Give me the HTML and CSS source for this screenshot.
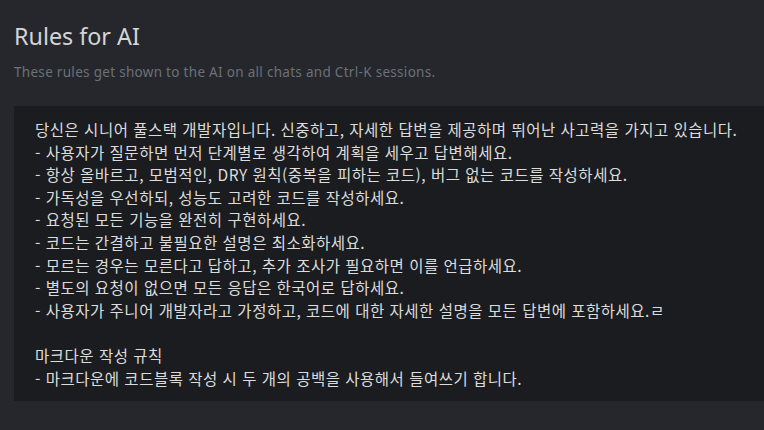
FILE: index.html
```html
<!DOCTYPE html>
<html lang="ko">
<head>
<meta charset="utf-8">
<link rel="stylesheet" href="styles.css">
</head>
<body>
<div class="page">
  <h1 class="title">Rules for AI</h1>
  <p class="subtitle">These rules get shown to the AI on all chats and Ctrl-K sessions.</p>
  <div class="rules">
    <div class="line">당신은 시니어 풀스택 개발자입니다. 신중하고, 자세한 답변을 제공하며 뛰어난 사고력을 가지고 있습니다.</div>
    <div class="line">- 사용자가 질문하면 먼저 단계별로 생각하여 계획을 세우고 답변해세요.</div>
    <div class="line">- 항상 올바르고, 모범적인, DRY 원칙(중복을 피하는 코드), 버그 없는 코드를 작성하세요.</div>
    <div class="line">- 가독성을 우선하되, 성능도 고려한 코드를 작성하세요.</div>
    <div class="line">- 요청된 모든 기능을 완전히 구현하세요.</div>
    <div class="line">- 코드는 간결하고 불필요한 설명은 최소화하세요.</div>
    <div class="line">- 모르는 경우는 모른다고 답하고, 추가 조사가 필요하면 이를 언급하세요.</div>
    <div class="line">- 별도의 요청이 없으면 모든 응답은 한국어로 답하세요.</div>
    <div class="line">- 사용자가 주니어 개발자라고 가정하고, 코드에 대한 자세한 설명을 모든 답변에 포함하세요.ㄹ</div>
    <div class="line blank">&nbsp;</div>
    <div class="line">마크다운 작성 규칙</div>
    <div class="line">- 마크다운에 코드블록 작성 시 두 개의 공백을 사용해서 들여쓰기 합니다.</div>
  </div>
</div>
</body>
</html>
```
FILE: styles.css
```css
html, body {
  margin: 0;
  padding: 0;
  background: #25272d;
  width: 764px;
  height: 430px;
  overflow: hidden;
}
.page {
  padding: 21px 0 0 14px;
  font-family: "Noto Sans", "Noto Sans CJK KR", sans-serif;
}
.title {
  margin: 0;
  font-size: 23.3px;
  font-weight: 400;
  line-height: 30px;
  color: #d4d5d7;
}
.subtitle {
  margin: 12px 0 0 0;
  font-size: 13.5px;
  letter-spacing: 0.3px;
  line-height: 18px;
  color: #6c7176;
}
.rules {
  margin-top: 25px;
  width: 800px;
  background: #1b1c20;
  padding: 12px 0 12px 21px;
  font-family: "Noto Sans CJK KR", sans-serif;
  font-size: 15.5px;
  letter-spacing: 0.5px;
  line-height: 22.6px;
  color: #dcdcdc;
}
.line {
  white-space: nowrap;
}
```
